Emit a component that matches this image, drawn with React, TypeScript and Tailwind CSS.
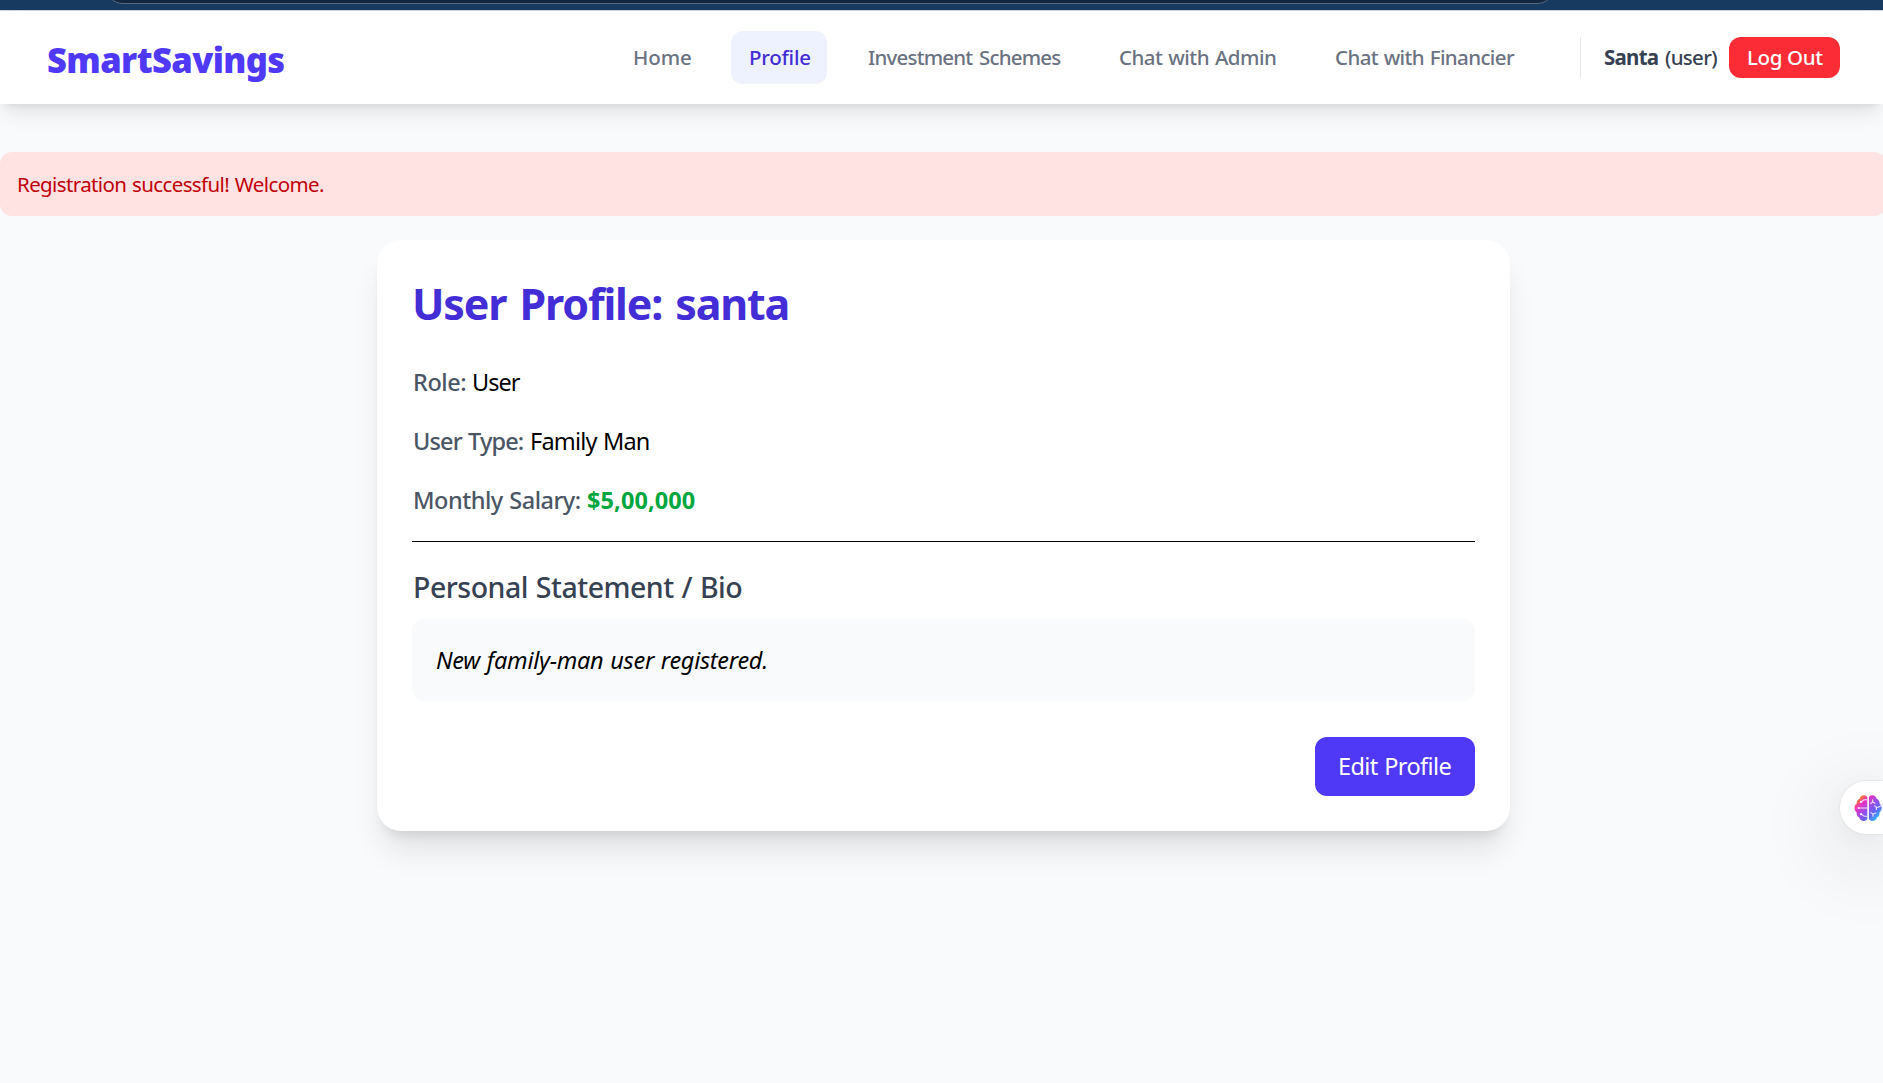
const links = [
  { label: "Home", style: "w-[95px] pl-[19px] text-gray-500 tracking-[-0.1px]" },
  { label: "Profile", style: "w-[96px] pl-[18px] bg-indigo-50 text-indigo-700 tracking-[-0.25px]" },
  { label: "Investment Schemes", style: "w-[229px] pl-[19px] text-gray-500 tracking-[-0.8px] [word-spacing:2px]" },
  { label: "Chat with Admin", style: "w-[194px] pl-[19px] text-gray-500 tracking-[-0.5px] [word-spacing:1px]" },
  { label: "Chat with Financier", style: "w-[217px] pl-[19px] text-gray-500 tracking-[-0.62px] [word-spacing:1px]" },
];

function BrowserEdge() {
  return (
    <div className="h-[11px] overflow-hidden border-b border-[#cfd5df] bg-[#173a61]">
      <div className="-mt-9 ml-[105px] h-10 w-[1450px] rounded-[18px] border border-[#566a7f] bg-[#12263f]" />
    </div>
  );
}

function Navbar() {
  return (
    <nav className="flex h-[93px] items-center bg-white pr-[43px] pl-[47px] shadow-[0_12px_20px_-4px_rgba(0,0,0,0.1),0_5px_8px_-5px_rgba(0,0,0,0.1)]">
      <div className="pt-[5px] text-[34.5px] leading-[42px] font-black tracking-[-0.6px] text-indigo-600">
        SmartSavings
      </div>
      <div className="ml-auto flex items-center gap-[22px] text-[20.5px] font-medium whitespace-nowrap">
        {links.map((l) => (
          <a key={l.label} className={`flex h-[53px] items-center rounded-xl ${l.style}`}>
            {l.label}
          </a>
        ))}
      </div>
      <div className="ml-[47px] flex h-[41px] items-center border-l border-gray-200 text-[20.5px] font-medium whitespace-nowrap text-gray-700">
        <span className="w-[84px] pl-[23px] font-bold tracking-[-0.75px]">Santa</span>
        <span className="w-[64px] tracking-[-0.7px]">(user)</span>
        <button className="flex h-[41px] w-[111px] items-center rounded-xl bg-[#fb2c36] pl-[18px] tracking-[-0.35px] text-white">
          Log Out
        </button>
      </div>
    </nav>
  );
}

function Brain() {
  return (
    <svg viewBox="0 0 28 28" className="size-7 shrink-0" fill="none">
      <defs>
        <linearGradient id="brain" x1="4" y1="2" x2="25" y2="24" gradientUnits="userSpaceOnUse">
          <stop offset="0" stopColor="#ffa01a" />
          <stop offset="0.1" stopColor="#fb7a3c" />
          <stop offset="0.26" stopColor="#ee30c0" />
          <stop offset="0.52" stopColor="#9a4fe8" />
          <stop offset="0.75" stopColor="#5f66f8" />
          <stop offset="1" stopColor="#2fc0ff" />
        </linearGradient>
      </defs>
      <path
        fill="url(#brain)"
        d="M13.3 3.2C12.8 1.5 11 .9 9.2 1.2 7 1.6 6 3 5.8 4.4 3.4 5.4 2.3 7.4 2.7 9.5 1 10.7.4 12.3.5 14c.1 2 .9 3.3 2.2 4.4-.3 2.1.6 4 2.6 5.2.5 2 2.1 3.4 4.4 3.4 2 0 3.3-.8 3.6-2.4ZM14.9 3.2c.5-1.7 2.3-2.3 4.1-2 2.2.4 3.2 1.8 3.4 3.2 2.4 1 3.5 3 3.1 5.1 1.7 1.2 2.3 2.8 2.2 4.5-.1 2-.9 3.3-2.2 4.4.3 2.1-.6 4-2.6 5.2-.5 2-2.1 3.4-4.4 3.4-2 0-3.3-.8-3.6-2.4Z"
      />
      <g stroke="#f3e3ff" strokeWidth="1.1" strokeLinecap="round">
        <path d="M13 5.7h-2.4C9 5.7 8.4 7.4 7 7.9M13 14H4.6M13 22.2h-2.4c-1.7 0-2-1.5-3.5-2" />
        <path d="M18.7 5.8v2.1l-2 1.7M18.7 7.9l2.2 1.4M27 11.7l-2.6 1.6-2-.1-1.7-1.4M22.4 13.2v2.3M16.9 18.6l2.1 1.6 2.8-1.2M19 20.2v2.1" />
      </g>
      <g fill="#f8eaff">
        <circle cx="7" cy="7.9" r="1.1" />
        <circle cx="4.6" cy="14" r="1.1" />
        <circle cx="7.1" cy="20.2" r="1.1" />
      </g>
    </svg>
  );
}

const label = "font-medium text-gray-600";
const row = "flex h-[59px] items-center pt-0.5 pl-px text-[23.5px] whitespace-nowrap";

export default function App() {
  return (
    <div className="relative h-[1083px] w-full overflow-hidden bg-gray-50 font-['Noto_Sans',sans-serif] text-black">
      <BrowserEdge />
      <Navbar />
      <div className="mt-12 -mr-[3px] flex h-16 items-center rounded-xl bg-[#ffe2e2] pl-[17px] text-[20.5px] tracking-[-0.62px] text-[#c10007] [word-spacing:1px]">
        Registration successful! Welcome.
      </div>
      <main className="mt-6 ml-[377px] flex h-[591px] w-[1133px] flex-col rounded-3xl bg-white p-[35px] pb-0 shadow-[0_24px_31px_-6px_rgba(0,0,0,0.1),0_10px_12px_-7px_rgba(0,0,0,0.1)]">
        <h1 className="mb-[20px] pt-px text-[43px] leading-[56px] font-bold tracking-[-1.15px] text-indigo-700 [word-spacing:3px]">
          User Profile: santa
        </h1>
        <div className={row}>
          <span className={`${label} w-[59px] tracking-[-0.45px]`}>Role:</span>
          <span className="tracking-[-1px]">User</span>
        </div>
        <div className={row}>
          <span className={`${label} w-[117px] tracking-[-0.85px] [word-spacing:1px]`}>User Type:</span>
          <span className="tracking-[-0.8px] [word-spacing:1px]">Family Man</span>
        </div>
        <div className={row}>
          <span className={`${label} w-[174px] tracking-[-0.5px] [word-spacing:1px]`}>Monthly Salary:</span>
          <span className="font-bold tracking-[0.1px] text-[#00a63e]">$5,00,000</span>
        </div>
        <hr className="mt-3 border-black" />
        <h2 className="mt-6 pl-px text-[28.5px] leading-[42px] font-medium tracking-[-0.5px] text-gray-700 [word-spacing:1px]">
          Personal Statement / Bio
        </h2>
        <p className="mt-[11px] flex h-[82px] items-center rounded-xl bg-gray-50 pt-0.5 pl-6 text-[23.5px] tracking-[-0.28px] italic [word-spacing:1px]">
          New family-man user registered.
        </p>
        <button className="mt-9 flex h-[59px] w-40 items-center self-end rounded-xl bg-indigo-600 pl-[23px] text-[23.5px] tracking-[-0.6px] whitespace-nowrap text-white [word-spacing:1px]">
          Edit Profile
        </button>
      </main>
      <div className="absolute top-[781px] right-0 flex h-[53px] w-[43px] items-center rounded-l-full bg-white pl-[14px] shadow-[0_0_1px_1px_rgba(0,0,0,0.04),0_6px_25px_rgba(0,0,0,0.04),0_20px_80px_14px_rgba(0,0,0,0.09)]">
        <Brain />
      </div>
    </div>
  );
}
